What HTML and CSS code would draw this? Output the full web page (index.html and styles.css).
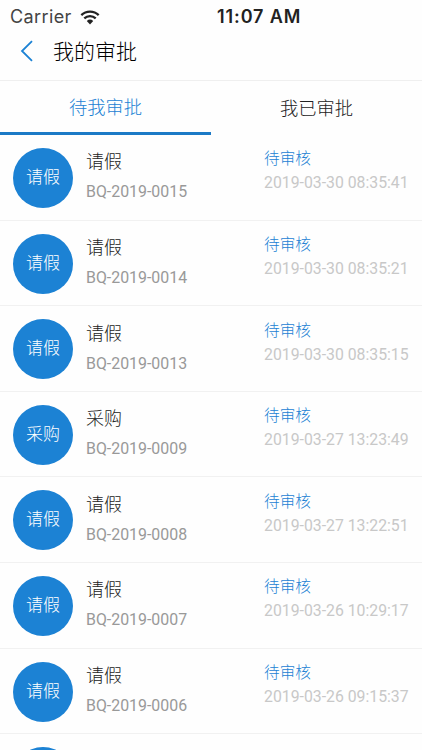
FILE: index.html
```html
<!DOCTYPE html>
<html lang="zh-CN">
  <head>
    <meta charset="UTF-8" />
    <meta name="viewport" content="width=device-width, initial-scale=1" />
    <title>我的审批</title>
    <link rel="stylesheet" href="styles.css">
  </head>
  <body>
    <div class="status-bar">
      <span class="carrier">Carrier</span>
      <svg class="wifi" width="20" height="15" viewBox="0 0 20 15">
        <path d="M1.3 5.2a12.6 12.6 0 0 1 17.4 0" />
        <path d="M4.3 8.3a8.3 8.3 0 0 1 11.4 0" />
        <path class="dot" d="M10 14.4 6.8 11.1a4.7 4.7 0 0 1 6.4 0z" />
      </svg>
      <span class="clock">11:07 AM</span>
    </div>

    <header class="nav">
      <svg class="back" width="14" height="22" viewBox="0 0 14 22">
        <path d="M12 1.2 2 11l10 9.8" />
      </svg>
      <h1>我的审批</h1>
    </header>

    <nav class="tabs">
      <a class="tab active">待我审批</a>
      <a class="tab">我已审批</a>
    </nav>

    <ul class="list">
      <li>
        <div class="avatar">请假</div>
        <div class="info"><p class="name">请假</p><p class="code">BQ-2019-0015</p></div>
        <div class="state"><p class="status">待审核</p><p class="date">2019-03-30 08:35:41</p></div>
      </li>
      <li>
        <div class="avatar">请假</div>
        <div class="info"><p class="name">请假</p><p class="code">BQ-2019-0014</p></div>
        <div class="state"><p class="status">待审核</p><p class="date">2019-03-30 08:35:21</p></div>
      </li>
      <li>
        <div class="avatar">请假</div>
        <div class="info"><p class="name">请假</p><p class="code">BQ-2019-0013</p></div>
        <div class="state"><p class="status">待审核</p><p class="date">2019-03-30 08:35:15</p></div>
      </li>
      <li>
        <div class="avatar">采购</div>
        <div class="info"><p class="name">采购</p><p class="code">BQ-2019-0009</p></div>
        <div class="state"><p class="status">待审核</p><p class="date">2019-03-27 13:23:49</p></div>
      </li>
      <li>
        <div class="avatar">请假</div>
        <div class="info"><p class="name">请假</p><p class="code">BQ-2019-0008</p></div>
        <div class="state"><p class="status">待审核</p><p class="date">2019-03-27 13:22:51</p></div>
      </li>
      <li>
        <div class="avatar">请假</div>
        <div class="info"><p class="name">请假</p><p class="code">BQ-2019-0007</p></div>
        <div class="state"><p class="status">待审核</p><p class="date">2019-03-26 10:29:17</p></div>
      </li>
      <li>
        <div class="avatar">请假</div>
        <div class="info"><p class="name">请假</p><p class="code">BQ-2019-0006</p></div>
        <div class="state"><p class="status">待审核</p><p class="date">2019-03-26 09:15:37</p></div>
      </li>
      <li>
        <div class="avatar"></div>
      </li>
    </ul>
  </body>
</html>
```

FILE: styles.css
```css
* {
  box-sizing: border-box;
}
body {
  margin: 0;
  height: 750px;
  overflow: hidden;
  display: flex;
  flex-direction: column;
  background: #fefefe;
  color: #222;
  font-family: Roboto, "Noto Sans CJK SC", sans-serif;
  font-weight: 300;
}
h1,
p,
ul {
  margin: 0;
  padding: 0;
}
.status-bar {
  flex: none;
  display: flex;
  align-items: center;
  height: 30px;
  padding: 4px 0 0 10px;
  font-family: Inter, sans-serif;
  font-size: 18px;
  font-weight: 400;
  line-height: 26px;
}
.carrier {
  width: 70px;
  color: #444;
  letter-spacing: 0.4px;
}
.wifi {
  fill: none;
  stroke: #222;
  stroke-width: 2.3;
}
.wifi .dot {
  fill: #222;
  stroke: none;
}
.clock {
  margin-left: 117px;
  color: #222;
  font-weight: 600;
  letter-spacing: 0.9px;
}
.nav {
  flex: none;
  display: flex;
  align-items: center;
  height: 51px;
  padding: 0 0 8px 20px;
  border-bottom: 1px solid #efefef;
}
.back {
  margin-right: 19px;
  fill: none;
  stroke: #1c82d4;
  stroke-width: 1.8;
}
h1 {
  padding-top: 2px;
  color: #000;
  font-size: 21px;
  font-weight: 300;
  line-height: 30px;
}
.tabs {
  flex: none;
  display: flex;
  height: 54px;
}
.tab {
  flex: 1;
  font-size: 18.3px;
  line-height: 55px;
  text-align: center;
}
.tab.active {
  color: #1c82d4;
  line-height: 53px;
  border-bottom: 3px solid #1c7ac6;
}
.list {
  list-style: none;
}
li {
  display: flex;
  height: 85.6px;
  padding: 13px 0 0 13px;
  border-bottom: 1px solid #f1f1f1;
}
.avatar {
  width: 60px;
  height: 60px;
  margin-right: 13px;
  border-radius: 50%;
  background: #1c82d4;
  color: #fff;
  font-size: 17px;
  line-height: 59px;
  text-align: center;
}
.info {
  width: 178px;
  padding-top: 0.4px;
}
.name {
  color: #222;
  font-size: 18px;
  line-height: 28px;
}
.code {
  color: #999;
  font-size: 15.9px;
  font-weight: 400;
  line-height: 32px;
}
.state {
  padding-top: 0.4px;
}
.status {
  color: #1c82d4;
  font-size: 15.7px;
  line-height: 22px;
}
.date {
  color: #c8c8c8;
  font-size: 15.8px;
  font-weight: 400;
  line-height: 26px;
}
```
